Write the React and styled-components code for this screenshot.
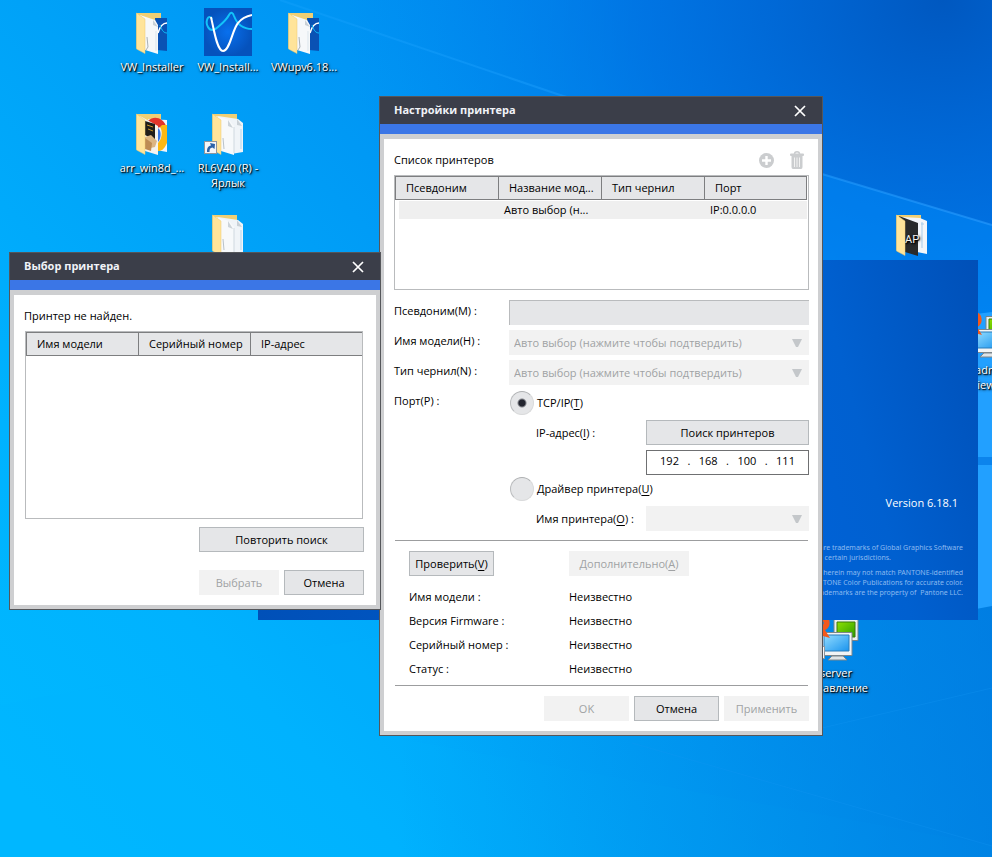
import React, { useState } from "react";
import styled, { createGlobalStyle } from "styled-components";

const desktopIcons = [
  { id: "installer", kind: "folder", content: "wave", label: ["VW_Installer"], col: 1, row: 1 },
  { id: "install", kind: "wave", label: ["VW_Install..."], col: 2, row: 1 },
  { id: "update", kind: "folder", content: "wave", label: ["VWupv6.18..."], col: 3, row: 1 },
  { id: "arr", kind: "folder", content: "chrome", label: ["arr_win8d_..."], col: 1, row: 2 },
  { id: "rl6", kind: "folder", content: "pages", shortcut: true, label: ["RL6V40 (R) -", "Ярлык"], col: 2, row: 2 },
  { id: "docs", kind: "folder", content: "pages", label: [], col: 2, row: 3 },
  { id: "ap", kind: "folder", content: "ap", label: [], col: 11, row: 3 },
  { id: "viewer", kind: "radmin", label: ["Radmin", "Viewer"], col: 12, row: 4 },
  { id: "server", kind: "radmin", shortcut: true, label: ["server", "управление"], col: 10, row: 7 },
];

const deviceInfo = [
  ["Имя модели :", "Неизвестно"],
  ["Версия Firmware :", "Неизвестно"],
  ["Серийный номер :", "Неизвестно"],
  ["Статус :", "Неизвестно"],
];

const Wallpaper = () => (
  <WallpaperSvg viewBox="0 0 992 857" preserveAspectRatio="none" aria-hidden="true">
    <defs>
      <linearGradient id="sky" x1="0" y1="0.9" x2="1" y2="0.1">
        <stop offset="0" stopColor="#00b8ff" />
        <stop offset="0.2" stopColor="#00b2fe" />
        <stop offset="0.45" stopColor="#00a2f8" />
        <stop offset="0.7" stopColor="#0090f2" />
        <stop offset="1" stopColor="#007cf0" />
      </linearGradient>
      <radialGradient id="corner" cx="0.95" cy="0" r="0.6">
        <stop offset="0" stopColor="#0058c0" />
        <stop offset="0.5" stopColor="#0068da" stopOpacity="0.6" />
        <stop offset="1" stopColor="#0080ea" stopOpacity="0" />
      </radialGradient>
      <linearGradient id="beam" x1="0" y1="0" x2="1" y2="0">
        <stop offset="0" stopColor="#1aa5ff" stopOpacity="0.3" />
        <stop offset="1" stopColor="#2a9cff" stopOpacity="0.6" />
      </linearGradient>
      <linearGradient id="shade" x1="0" y1="0" x2="1" y2="0">
        <stop offset="0" stopColor="#0072d8" stopOpacity="0" />
        <stop offset="1" stopColor="#0072d8" stopOpacity="0.6" />
      </linearGradient>
    </defs>
    <rect width="992" height="857" fill="url(#sky)" />
    <rect width="992" height="857" fill="url(#corner)" />
    <path d="M560 95 L822 174 L992 225 V320 L822 290 Z" fill="#0090ff" opacity="0.4" />
    <path d="M280 0 L560 95 L822 174 L992 225" fill="none" stroke="url(#beam)" strokeWidth="2" />
    <path d="M0 705 L290 652 L380 636 V735 L992 845 V857 H0 Z" fill="#00b4ff" opacity="0.12" />
    <path d="M400 600 H992 V857 H400 Z" fill="url(#shade)" />
    <path d="M632 743 L992 846" stroke="#1497f4" strokeWidth="1" opacity="0.3" />
    <path d="M822 728 L992 688" stroke="#1497f4" strokeWidth="1" opacity="0.3" />
    <path d="M960 316 L992 312 V457 H960 Z" fill="#22a0ff" />
    <path d="M960 457 H992 V465 H960 Z" fill="#0c84ec" />
    <path d="M960 465 H992 V606 L960 612 Z" fill="#22a0ff" />
  </WallpaperSvg>
);

const ShortcutMark = () => (
  <g>
    <rect x="0.5" y="32.5" width="12" height="12" fill="#f4f6f9" stroke="#8e969e" />
    <path d="M3 43 C3 39 4 37 7 36.5 L6 34 L11 35 L10.5 40 L8.5 38.5 C6 39 5.5 40 5.5 43 Z" fill="#2a62a8" />
  </g>
);

const FolderContent = ({ content }) => {
  if (content === "wave") {
    return (
      <g fill="none">
        <path d="M27 10 L39 10 V43 L29 42 Z" fill="#0a52b4" />
        <path d="M30 25 C32 18 35 15 39 15" stroke="#fff" strokeWidth="1.5" />
        <path d="M32 17 C34 23 36 25 39 25" stroke="#0fb9f5" />
        <path d="M12 7 L27 12 L30 17 V46 L17 42 Z" fill="#f6f8fa" />
        <path d="M25 12 V17 L30 19 Z" fill="#c9d0d6" />
        <path d="M19 29 L20 39 L18 42" stroke="#a9b0b6" />
        <path d="M28 23 V43" stroke="#dbe5ec" />
      </g>
    );
  }
  if (content === "chrome") {
    return (
      <g fill="none">
        <path d="M20 10 L39 11 V43 L28 41 Z" fill="#eef3fa" />
        <path d="M20 12 C26 6 35 9 38 17 L28 19 Z" fill="#e2352c" />
        <path d="M34 16 H39 V34 C36 41 33 42 30 42 L30 34 C34 30 35 22 32 18 Z" fill="#fcb814" />
        <path d="M30 19 C34 22 33 30 30 33 Z" fill="#3b79e8" />
        <path d="M12 7 L30 17 V46 L17 42 Z" fill="#f5f3ef" />
        <path d="M17 12 L27 15 V31 L17 26 Z" fill="#211d1a" />
        <path d="M19 16 L25 18 M20 20 L25 22" stroke="#c99328" />
        <path d="M17 28 L23 26 L29 32 L27 38 L18 40 Z" fill="#dcb583" />
        <path d="M17 29 L24 34 L23 42 L17 40 Z" fill="#bd8b54" />
      </g>
    );
  }
  if (content === "ap") {
    return (
      <g fill="none">
        <path d="M14 7 L32 8 L39 11 V44 L29 42 Z" fill="#f3f6fa" />
        <path d="M34 12 V38 M33 14 H36" stroke="#a9cdea" />
        <path d="M11 6 L30 13 V46 L17 42 Z" fill="#292a2b" />
        <CoverText x="17" y="33">AP</CoverText>
      </g>
    );
  }
  return (
    <g fill="none">
      <path d="M14 7 L34 10 L39 14 V43 L27 45 Z" fill="#f0f4f8" />
      <path d="M33 10 V16 L38 17 Z" fill="#c9d0d6" />
      <path d="M37 20 V40" stroke="#aed7f3" />
      <path d="M12 7 L25 11 L30 17 V46 L17 42 Z" fill="#f7f9fb" />
      <path d="M24 11 V17 L29 19 Z" fill="#ccd3d9" />
      <path d="M19 29 L20 40" stroke="#b9c2c9" />
      <path d="M30 18 V44" stroke="#cfd8df" />
    </g>
  );
};

const IconPicture = ({ kind, content, shortcut }) => (
  <IconSvg viewBox="0 0 48 48" aria-hidden="true">
    {kind === "wave" && (
      <g fill="none" strokeWidth="2">
        <defs>
          <radialGradient id="tile">
            <stop offset="0" stopColor="#0870ee" />
            <stop offset="1" stopColor="#0552bc" />
          </radialGradient>
        </defs>
        <rect width="48" height="48" fill="url(#tile)" />
        <path d="M8 11 C4 5 1 14 4 19 C6 23 10 23 14 19 C20 14 23 11 25 7 C27 3 29 5 30 8 C33 16 38 21 48 21" stroke="#12c4fa" />
        <path d="M7 9 C10 22 13 43 19 43 C26 43 28 22 34 15 C38 10 43 8 48 7" stroke="#fff" />
      </g>
    )}
    {kind === "folder" && (
      <g>
        <path d="M8.5 5 H33 V40 L17 42 L8.5 40 Z" fill="#f0cf74" />
        <FolderContent content={content} />
        <path d="M8.5 5 L17 11 V45.5 L8.5 41 Z" fill="#ffe49a" stroke="#ecc96c" strokeWidth="0.5" />
      </g>
    )}
    {kind === "radmin" && (
      <g>
        <defs>
          <linearGradient id="green" x1="0" y1="0" x2="1" y2="1">
            <stop offset="0" stopColor="#8ee000" />
            <stop offset="1" stopColor="#2c9c00" />
          </linearGradient>
          <linearGradient id="blue" x1="0" y1="0" x2="1" y2="1">
            <stop offset="0" stopColor="#92dcff" />
            <stop offset="1" stopColor="#1a94ee" />
          </linearGradient>
        </defs>
        <path d="M22 5.5 H46 V26.5 H22 Z" fill="#ebefef" stroke="#76828a" />
        <path d="M25 8 H43 V23 H25 Z" fill="url(#green)" stroke="#3a7a08" />
        <path d="M9 18.5 H40 V41.5 H9 Z" fill="#f2f4f5" stroke="#7d868c" />
        <path d="M12 21 H37 V37 H12 Z" fill="url(#blue)" stroke="#2a7cba" />
        <path d="M20 42 H31 L35 46 H16 Z" fill="#dfe4e6" stroke="#7d868c" />
        <path d="M3 1 H11 C19 1 20 14 13 16 L18 24 L11 22 L8 18 V24 H2 Z M8 6 V12 C13 12 13 6 8 6 Z" fill="#f4581a" fillRule="evenodd" />
      </g>
    )}
    {shortcut && <ShortcutMark />}
  </IconSvg>
);

const CloseMark = () => (
  <svg width="12" height="12" viewBox="0 0 12 12" aria-hidden="true">
    <path d="M1 1 L11 11 M11 1 L1 11" stroke="#fff" strokeWidth="1.7" />
  </svg>
);

const AddMark = () => (
  <svg width="15" height="15" viewBox="0 0 15 15" aria-hidden="true">
    <circle cx="7.5" cy="7.5" r="7.5" fill="#cbcdcf" />
    <path d="M7.5 3 V12 M3 7.5 H12" stroke="#fff" strokeWidth="2.4" />
  </svg>
);

const TrashMark = () => (
  <svg width="14" height="18" viewBox="0 0 14 18" aria-hidden="true">
    <path d="M4.5 3 C4.5 0 9.5 0 9.5 3" fill="none" stroke="#cbcdcf" strokeWidth="1.5" />
    <rect x="0" y="2.5" width="14" height="2.5" rx="1" fill="#cbcdcf" />
    <path d="M1.5 5 H12.5 V16 Q12.5 18 11 18 H3 Q1.5 18 1.5 16 Z" fill="#cbcdcf" />
    <path d="M4.5 6.5 V16 M7 6.5 V16 M9.5 6.5 V16" stroke="#f2f2f2" strokeWidth="1" />
  </svg>
);

const Dropdown = ({ id, text }) => (
  <SelectBox>
    <Select id={id} disabled>
      <option>{text}</option>
    </Select>
    <Arrow viewBox="0 0 10 8" aria-hidden="true">
      <path d="M0 0 H10 L6 8 H4 Z" fill="#c4c7ca" />
    </Arrow>
  </SelectBox>
);

const Dialog = ({ title, children, ...place }) => (
  <Window {...place} role="dialog" aria-label={title}>
    <TitleBar>
      <Title>{title}</Title>
      <CloseButton type="button" aria-label="Закрыть">
        <CloseMark />
      </CloseButton>
    </TitleBar>
    <Frame>
      <Body>{children}</Body>
    </Frame>
  </Window>
);

const SettingsDialog = () => {
  const [port, setPort] = useState("tcp");
  const [ip, setIp] = useState(["192", "168", "100", "111"]);

  const onChangeOctet = (index, value) => {
    setIp((prev) => prev.map((octet, i) => (i === index ? value : octet)));
  };

  return (
    <Dialog title="Настройки принтера" $x={379} $y={96} $width={444}>
      <ListHeader>
        <p>Список принтеров</p>
        <ListActions>
          <IconButton type="button" aria-label="Добавить" disabled>
            <AddMark />
          </IconButton>
          <IconButton type="button" aria-label="Удалить" disabled>
            <TrashMark />
          </IconButton>
        </ListActions>
      </ListHeader>
      <ListBox $height={115} $inset>
        <Table>
          <thead>
            <tr>
              <Th $width={104}>Псевдоним</Th>
              <Th $width={103}>Название мод...</Th>
              <Th $width={103}>Тип чернил</Th>
              <Th>Порт</Th>
            </tr>
          </thead>
          <tbody>
            <tr>
              <Td />
              <Td>Авто выбор (н...</Td>
              <Td />
              <Td>IP:0.0.0.0</Td>
            </tr>
          </tbody>
        </Table>
      </ListBox>
      <Form>
        <FieldLabel as="label" htmlFor="alias">Псевдоним(M) :</FieldLabel>
        <TextInput id="alias" disabled />
        <FieldLabel as="label" htmlFor="model">Имя модели(H) :</FieldLabel>
        <Dropdown id="model" text="Авто выбор (нажмите чтобы подтвердить)" />
        <FieldLabel as="label" htmlFor="ink">Тип чернил(N) :</FieldLabel>
        <Dropdown id="ink" text="Авто выбор (нажмите чтобы подтвердить)" />
        <FieldLabel>Порт(P) :</FieldLabel>
        <PortGroup>
          <PortOption>
            <RadioLabel>
              <Radio type="radio" name="port" checked={port === "tcp"} onChange={() => setPort("tcp")} />
              <span>TCP/IP(<u>T</u>)</span>
            </RadioLabel>
            <PortRow>
              <label htmlFor="octet-0">IP-адрес(<u>I</u>) :</label>
              <Button type="button">Поиск принтеров</Button>
            </PortRow>
            <PortRow>
              <span />
              <IpBox>
                {ip.map((octet, index) => (
                  <React.Fragment key={index}>
                    {index > 0 && <Dot>.</Dot>}
                    <Octet
                      id={`octet-${index}`}
                      aria-label={`IP-адрес, часть ${index + 1}`}
                      value={octet}
                      maxLength={3}
                      onChange={(e) => onChangeOctet(index, e.target.value)}
                    />
                  </React.Fragment>
                ))}
              </IpBox>
            </PortRow>
          </PortOption>
          <PortOption>
            <RadioLabel>
              <Radio type="radio" name="port" checked={port === "driver"} onChange={() => setPort("driver")} />
              <span>Драйвер принтера(<u>U</u>)</span>
            </RadioLabel>
            <PortRow>
              <label htmlFor="driver">Имя принтера(<u>O</u>) :</label>
              <Dropdown id="driver" text="" />
            </PortRow>
          </PortOption>
        </PortGroup>
      </Form>
      <CheckSection>
        <CheckRow>
          <Button type="button" $width={85}>
            <span>Проверить(<u>V</u>)</span>
          </Button>
          <Button type="button" $width={120} disabled>
            <span>Дополнительно(<u>A</u>)</span>
          </Button>
        </CheckRow>
        <InfoList>
          {deviceInfo.map(([name, value]) => (
            <React.Fragment key={name}>
              <dt>{name}</dt>
              <dd>{value}</dd>
            </React.Fragment>
          ))}
        </InfoList>
      </CheckSection>
      <Footer>
        <Button type="button" $width={85} disabled>OK</Button>
        <Button type="button" $width={85}>Отмена</Button>
        <Button type="button" $width={85} disabled>Применить</Button>
      </Footer>
    </Dialog>
  );
};

const PickDialog = () => (
  <Dialog title="Выбор принтера" $x={9} $y={252} $width={372}>
    <ListHeader>
      <p>Принтер не найден.</p>
    </ListHeader>
    <ListBox $height={188}>
      <Table>
        <thead>
          <tr>
            <Th $width={113}>Имя модели</Th>
            <Th $width={112}>Серийный номер</Th>
            <Th $last>IP-адрес</Th>
          </tr>
        </thead>
      </Table>
    </ListBox>
    <PickActions>
      <Button type="button">Повторить поиск</Button>
      <PickButtons>
        <Button type="button" disabled>Выбрать</Button>
        <Button type="button">Отмена</Button>
      </PickButtons>
    </PickActions>
  </Dialog>
);

const App = () => (
  <Desktop>
    <GlobalStyle />
    <Wallpaper />
    <IconGrid>
      {desktopIcons.map((icon) => (
        <DesktopIcon key={icon.id} $col={icon.col} $row={icon.row}>
          <IconPicture kind={icon.kind} content={icon.content} shortcut={icon.shortcut} />
          {icon.label.map((line) => (
            <span key={line}>{line}</span>
          ))}
        </DesktopIcon>
      ))}
    </IconGrid>
    <Splash>
      <Version>Version 6.18.1</Version>
      <Legal>
        <p>are trademarks of Global Graphics Software</p>
        <p className="short">in certain jurisdictions.</p>
      </Legal>
      <Legal>
        <p>herein may not match PANTONE-identified</p>
        <p>PANTONE Color Publications for accurate color.</p>
        <p>trademarks are the property of &nbsp;Pantone LLC.</p>
      </Legal>
    </Splash>
    <SettingsDialog />
    <PickDialog />
  </Desktop>
);

export default App;

const GlobalStyle = createGlobalStyle`
  * {
    box-sizing: border-box;
  }
  body {
    margin: 0;
    color: #000;
    font-family: "Open Sans", "Noto Sans", sans-serif;
    font-size: 11px;
    line-height: 18px;
  }
  p, dl, dd {
    margin: 0;
  }
  button, input, select {
    margin: 0;
    padding: 0;
    font: inherit;
    color: inherit;
  }
  u {
    text-underline-offset: 2px;
  }
`;

const Desktop = styled.main`
  position: relative;
  min-height: 100vh;
  overflow: hidden;
  background-color: #00a2f8;
`;

const WallpaperSvg = styled.svg`
  position: absolute;
  inset: 0;
  width: 100%;
  height: 100%;
`;

const IconGrid = styled.div`
  position: absolute;
  inset: 0;
  padding: 8px 0 0 114px;
  display: grid;
  grid-template-columns: repeat(12, 76px);
  grid-template-rows: repeat(8, 101px);
`;

const DesktopIcon = styled.div`
  grid-column: ${(props) => props.$col};
  grid-row: ${(props) => props.$row};
  display: flex;
  flex-direction: column;
  align-items: center;
  color: #fff;
  line-height: 15px;
  white-space: nowrap;
  text-shadow: 1px 1px 1px #000, 1px 1px 3px #000;
`;

const IconSvg = styled.svg`
  flex: none;
  width: 48px;
  height: 48px;
  margin-bottom: 3px;
`;

const CoverText = styled.text`
  fill: #f2f2f2;
  font-family: Roboto, sans-serif;
  font-size: 11px;
`;

const Splash = styled.section`
  position: absolute;
  left: 258px;
  top: 260px;
  width: 720px;
  height: 360px;
  padding: 0 15px 22px;
  display: flex;
  flex-direction: column;
  justify-content: flex-end;
  background: linear-gradient(75deg, #0050b8 0%, #0062d6 70%, #0060d0 80%, #0050b8 100%);
`;

const Version = styled.p`
  padding: 0 5px 31px;
  color: #fff;
  text-align: right;
`;

const Legal = styled.div`
  padding-bottom: 5px;
  color: #8cbaf0;
  font-family: "Noto Sans", sans-serif;
  font-size: 7px;
  line-height: 10px;
  text-align: right;

  &:last-child {
    padding-bottom: 0;
  }
  .short {
    padding-right: 72px;
  }
`;

const Window = styled.section`
  position: absolute;
  left: ${(props) => props.$x}px;
  top: ${(props) => props.$y}px;
  width: ${(props) => props.$width}px;
  border: 1px solid #55565a;
  background-color: #fff;
`;

const TitleBar = styled.header`
  display: flex;
  justify-content: space-between;
  align-items: center;
  height: 37px;
  padding: 0 14px;
  background-color: #3b3e49;
  border-bottom: 10px solid #3b76e6;
`;

const Title = styled.h2`
  margin: 0;
  padding-bottom: 1px;
  color: #f1f3f8;
  font-size: 11px;
  font-weight: 700;
`;

const CloseButton = styled.button`
  display: flex;
  align-items: center;
  justify-content: center;
  width: 16px;
  height: 18px;
  border: 0;
  background: none;
`;

const Frame = styled.div`
  border: 4px solid #cecfd1;
  border-top-width: 5px;
`;

const Body = styled.div`
  padding: 12px 9px 10px 10px;
`;

const ListHeader = styled.div`
  display: flex;
  justify-content: space-between;
  align-items: center;
  height: 18px;
  margin-bottom: 6px;
`;

const ListActions = styled.div`
  display: flex;
  align-items: center;
  gap: 16px;
  padding-right: 5px;
`;

const IconButton = styled.button`
  display: flex;
  border: 0;
  background: none;
`;

const ListBox = styled.div`
  height: ${(props) => props.$height}px;
  padding-right: ${(props) => (props.$inset ? 1 : 0)}px;
  border: 1px solid #b9bbbd;
  margin: ${(props) => (props.$inset ? "0" : "0 4px 0 1px")};
`;

const Table = styled.table`
  width: 100%;
  table-layout: fixed;
  border-spacing: 0;
`;

const Th = styled.th`
  width: ${(props) => (props.$width ? `${props.$width}px` : "auto")};
  height: 24px;
  padding: 0 0 0 10px;
  border: 1px solid #7d7e80;
  border-left-width: 0;
  border-right-width: ${(props) => (props.$last ? 0 : 1)}px;
  background-color: #e5e6e8;
  font-weight: 400;
  text-align: left;
  white-space: nowrap;

  &:first-child {
    border-left-width: 1px;
  }
`;

const Td = styled.td`
  height: 19px;
  padding: 0 0 0 5px;
  border-top: 1px solid #fff;
  background-color: #efefef;
  white-space: nowrap;

  &:first-child {
    border-left: 4px solid #fff;
  }
`;

const Form = styled.div`
  display: grid;
  grid-template-columns: 115px 1fr;
  row-gap: 5px;
  padding: 10px 0 9px;
`;

const FieldLabel = styled.span`
  line-height: 22px;
`;

const TextInput = styled.input`
  width: 100%;
  height: 25px;
  border: solid #b9bbbd;
  border-width: 1px 0 0 1px;
  background-color: #e5e6e8;
`;

const SelectBox = styled.div`
  position: relative;
`;

const Select = styled.select`
  display: block;
  width: 100%;
  height: 25px;
  padding: 0 24px 0 5px;
  appearance: none;
  border: 0;
  border-radius: 0;
  background-color: #f2f2f2;
  color: #a0a2a4;
  opacity: 1;
`;

const Arrow = styled.svg`
  position: absolute;
  right: 7px;
  top: 9px;
  width: 10px;
  height: 8px;
  pointer-events: none;
`;

const PortGroup = styled.div`
  display: flex;
  flex-direction: column;
  gap: 1px;
`;

const PortOption = styled.div`
  display: flex;
  flex-direction: column;
  gap: 5px;
`;

const RadioLabel = styled.label`
  display: flex;
  align-items: center;
  gap: 3px;
  height: 25px;
  padding-left: 1px;
`;

const Radio = styled.input`
  appearance: none;
  width: 24px;
  height: 24px;
  border: 1px solid #d9dadb;
  border-top-color: #aeb0b2;
  border-left-color: #bbbdbf;
  border-radius: 50%;
  background-color: #e5e6e8;

  &:checked {
    background-image: radial-gradient(circle, #23252f 0 3px, transparent 5px);
  }
`;

const PortRow = styled.div`
  display: grid;
  grid-template-columns: 1fr 163px;
  align-items: center;
  padding-left: 27px;
`;

const Button = styled.button`
  width: ${(props) => (props.$width ? `${props.$width}px` : "auto")};
  height: 25px;
  border: 1px solid #b5b9bc;
  background-color: #e5e6e8;
  white-space: nowrap;

  &:disabled {
    border-color: #f2f2f2;
    background-color: #f2f2f2;
    color: #a0a2a4;
  }
`;

const IpBox = styled.div`
  display: flex;
  align-items: flex-start;
  height: 25px;
  padding: 1px 9px;
  border: 1px solid #6f7072;
`;

const Octet = styled.input`
  width: 27px;
  height: 18px;
  border: 0;
  background: none;
  text-align: center;
`;

const Dot = styled.span`
  width: 12px;
  text-align: center;
`;

const CheckSection = styled.section`
  margin: 0 1px;
  padding: 10px 14px 4px;
  border: solid #9c9d9f;
  border-width: 1px 0;
`;

const CheckRow = styled.div`
  display: grid;
  grid-template-columns: 160px 1fr;
  margin-bottom: 9px;
`;

const InfoList = styled.dl`
  display: grid;
  grid-template-columns: 160px 1fr;
  line-height: 24px;
`;

const Footer = styled.footer`
  display: flex;
  justify-content: flex-end;
  gap: 5px;
  padding-top: 10px;
`;

const PickActions = styled.div`
  display: flex;
  flex-direction: column;
  gap: 18px;
  width: 165px;
  margin: 8px 3px 0 auto;
`;

const PickButtons = styled.div`
  display: grid;
  grid-template-columns: 1fr 1fr;
  gap: 5px;
`;
